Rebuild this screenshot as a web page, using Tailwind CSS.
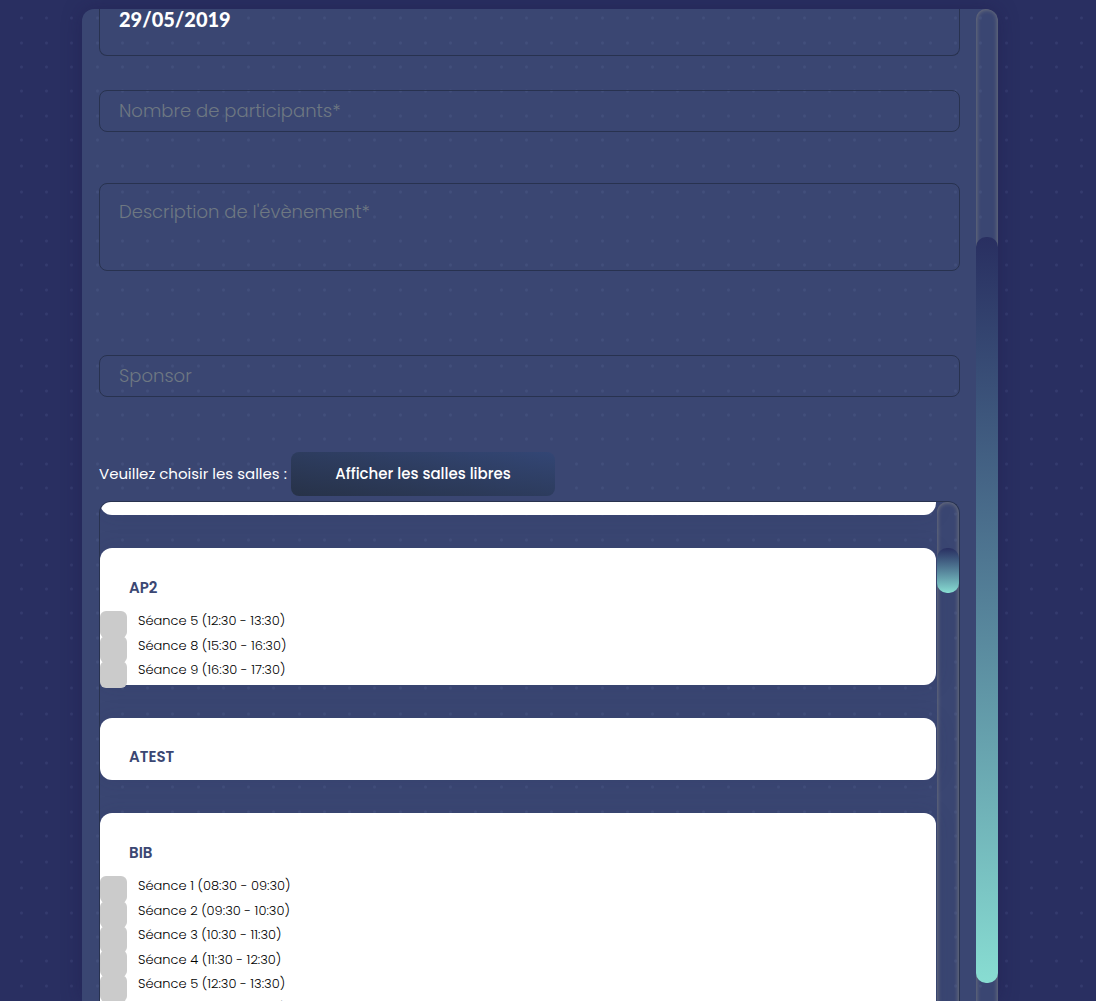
<!DOCTYPE html>
<html lang="fr">
<head>
<meta charset="utf-8">
<meta name="viewport" content="width=device-width, initial-scale=1">
<title>Réservation de salles</title>
<script src="https://cdn.jsdelivr.net/npm/@tailwindcss/browser@4"></script>
</head>
<body class="relative isolate h-screen overflow-hidden bg-[#292f61] font-['Poppins','Inter',sans-serif] text-white">
<!-- Dotted page background -->
<svg class="absolute inset-0 -z-10 h-full w-full" aria-hidden="true">
  <defs>
    <pattern id="dots" width="101" height="174" patternUnits="userSpaceOnUse">
      <g id="row" fill="#343b6e"><circle cx="21.5" cy="18" r="1.5"/><circle cx="46.5" cy="18" r="1.5"/><circle cx="71.5" cy="18" r="1.5"/><circle cx="97.5" cy="18" r="1.5"/></g>
      <use href="#row" y="25"/><use href="#row" y="49"/><use href="#row" y="73"/><use href="#row" y="98"/><use href="#row" y="122"/><use href="#row" y="148"/>
    </pattern>
  </defs>
  <rect width="100%" height="100%" fill="url(#dots)"/>
</svg>

<div class="h-full pt-[9px] pr-[98px] pl-[82px]">
  <main class="flex h-full overflow-hidden rounded-t-xl bg-[#657f9d]/30 shadow-[0_0_20px_rgba(30,20,70,0.35)]">
    <form class="flex min-w-0 flex-1 flex-col pr-4 pl-[17px]">
      <input type="text" aria-label="Date" value="29/05/2019" class="h-[47px] w-full shrink-0 rounded-b-lg border border-t-0 border-[#28324f] bg-transparent px-[19px] pb-[27px] font-['Lato'] text-xl font-black outline-none">
      <input type="text" aria-label="Nombre de participants" placeholder="Nombre de participants*" class="mt-[34px] h-[42px] w-full shrink-0 rounded-lg border border-[#28324f] bg-transparent px-[19px] pb-0.5 text-lg font-light outline-none placeholder:text-[#6e7882]">
      <textarea aria-label="Description de l'évènement" placeholder="Description de l'évènement*" class="mt-[51px] h-[88px] w-full shrink-0 resize-none rounded-lg border border-[#28324f] bg-transparent px-[19px] py-[14px] text-lg font-light outline-none placeholder:text-[#6e7882]"></textarea>
      <input type="text" aria-label="Sponsor" placeholder="Sponsor" class="mt-[84px] h-[42px] w-full shrink-0 rounded-lg border border-[#28324f] bg-transparent px-[19px] pb-0.5 text-lg font-light outline-none placeholder:text-[#6e7882]">

      <div class="mt-[55px] flex shrink-0 items-center">
        <p class="w-48 whitespace-nowrap text-[15px]">Veuillez choisir les salles :</p>
        <button type="button" class="h-11 w-[264px] rounded-lg bg-linear-to-tr from-[#273248] to-[#334675] text-[15px] font-medium">Afficher les salles libres</button>
      </div>

      <section aria-label="Salles" class="mt-[5px] flex min-h-0 flex-1 overflow-hidden rounded-t-xl border border-b-0 border-[#28324f]">
        <div class="mr-px flex min-w-0 flex-1 flex-col gap-[33px] text-[13px] font-light text-black">
          <div class="h-[13px] shrink-0 rounded-b-xl bg-white shadow-[0_0_20px_rgba(40,45,95,0.15)]"></div>
          <fieldset class="shrink-0 rounded-xl bg-white pt-7 pb-[3px] shadow-[0_0_20px_rgba(40,45,95,0.15)]">
            <h2 class="mb-2 pl-[29px] text-[15px] leading-6 font-semibold text-[#3b4773]">AP2</h2>
            <label class="flex h-[25px] items-center gap-[11px]"><input type="checkbox" class="mt-2 size-[27px] shrink-0 appearance-none rounded-md bg-[#cbcbcb]">Séance 5 (12:30 - 13:30)</label>
            <label class="flex h-[25px] items-center gap-[11px]"><input type="checkbox" class="mt-2 size-[27px] shrink-0 appearance-none rounded-md bg-[#cbcbcb]">Séance 8 (15:30 - 16:30)</label>
            <label class="flex h-6 items-center gap-[11px]"><input type="checkbox" class="mt-2 size-[27px] shrink-0 appearance-none rounded-md bg-[#cbcbcb]">Séance 9 (16:30 - 17:30)</label>
          </fieldset>
          <fieldset class="shrink-0 rounded-xl bg-white pt-[27px] pb-[11px] shadow-[0_0_20px_rgba(40,45,95,0.15)]">
            <h2 class="pl-[29px] text-[15px] leading-6 font-semibold text-[#3b4773]">ATEST</h2>
          </fieldset>
          <fieldset class="shrink-0 rounded-xl bg-white pt-7 pb-[3px] shadow-[0_0_20px_rgba(40,45,95,0.15)]">
            <h2 class="mb-2 pl-[29px] text-[15px] leading-6 font-semibold text-[#3b4773]">BIB</h2>
            <label class="flex h-[25px] items-center gap-[11px]"><input type="checkbox" class="mt-2 size-[27px] shrink-0 appearance-none rounded-md bg-[#cbcbcb]">Séance 1 (08:30 - 09:30)</label>
            <label class="flex h-[25px] items-center gap-[11px]"><input type="checkbox" class="mt-2 size-[27px] shrink-0 appearance-none rounded-md bg-[#cbcbcb]">Séance 2 (09:30 - 10:30)</label>
            <label class="flex h-6 items-center gap-[11px]"><input type="checkbox" class="mt-2 size-[27px] shrink-0 appearance-none rounded-md bg-[#cbcbcb]">Séance 3 (10:30 - 11:30)</label>
            <label class="flex h-[25px] items-center gap-[11px]"><input type="checkbox" class="mt-2 size-[27px] shrink-0 appearance-none rounded-md bg-[#cbcbcb]">Séance 4 (11:30 - 12:30)</label>
            <label class="flex h-6 items-center gap-[11px]"><input type="checkbox" class="mt-2 size-[27px] shrink-0 appearance-none rounded-md bg-[#cbcbcb]">Séance 5 (12:30 - 13:30)</label>
            <label class="flex h-[25px] items-center gap-[11px]"><input type="checkbox" class="mt-2 size-[27px] shrink-0 appearance-none rounded-md bg-[#cbcbcb]">Séance 6 (13:30 - 14:30)</label>
          </fieldset>
        </div>
        <!-- Room list scrollbar -->
        <div class="-mb-5 w-[22px] shrink-0 rounded-t-[10px] pt-[46px] shadow-[inset_0_0_5px_#808080]">
          <div class="h-[45px] rounded-[10px] bg-linear-to-b from-[#292f61] to-[#88ddd2]"></div>
        </div>
      </section>
    </form>
    <!-- Panel scrollbar -->
    <div class="-mb-5 w-[22px] shrink-0 rounded-t-[10px] pt-[228px] pb-[38px] shadow-[inset_0_0_5px_#808080]">
      <div class="h-full rounded-[10px] bg-linear-to-b from-[#292f61] to-[#88ddd2]"></div>
    </div>
  </main>
</div>
</body>
</html>
